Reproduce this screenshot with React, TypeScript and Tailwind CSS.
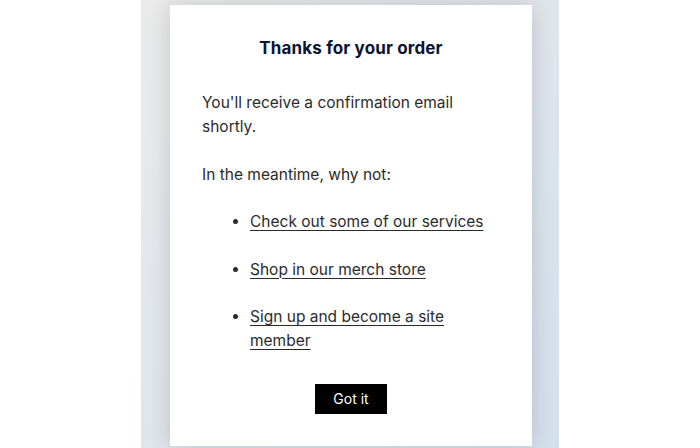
import React from 'react';

const LINKS = [
  'Check out some of our services',
  'Shop in our merch store',
  'Sign up and become a site member',
];

export default function App() {
  return (
    <div className="w-full h-[448px] bg-white flex justify-center overflow-hidden" style={{ fontFamily: 'Inter, "Noto Sans", sans-serif' }}>
      {/* Backdrop panel */}
      <div className="w-[418px] h-full pt-[5px] pl-[29px] flex bg-gradient-to-br from-[#ebebeb] to-[#d4e0ec]">
        {/* Card */}
        <div className="w-[362px] h-[441px] bg-white shadow-[0_0_22px_rgba(0,0,0,0.16)] px-8 pt-[32px] flex flex-col">
          <h1 className="text-[17px] leading-[22px] font-bold text-[#0c1433] text-center tracking-[0.15px]">
            Thanks for your order
          </h1>

          <div className="mt-[32px] text-[15.5px] leading-[24px] text-[#2b2b2b]">
            <p>You'll receive a confirmation email shortly.</p>
            <p className="mt-6">In the meantime, why not:</p>
            <ul className="mt-[23px] pl-[48px] list-disc space-y-[23.5px]">
              {LINKS.map((label) => (
                <li key={label}>
                  <a href="#" className="underline underline-offset-[3px] decoration-1">
                    {label}
                  </a>
                </li>
              ))}
            </ul>
          </div>

          <div className="mt-[31px] flex justify-center">
            <button className="h-[30px] px-[18px] bg-black text-white text-[14px] leading-none">
              Got it
            </button>
          </div>
        </div>
      </div>
    </div>
  );
}
